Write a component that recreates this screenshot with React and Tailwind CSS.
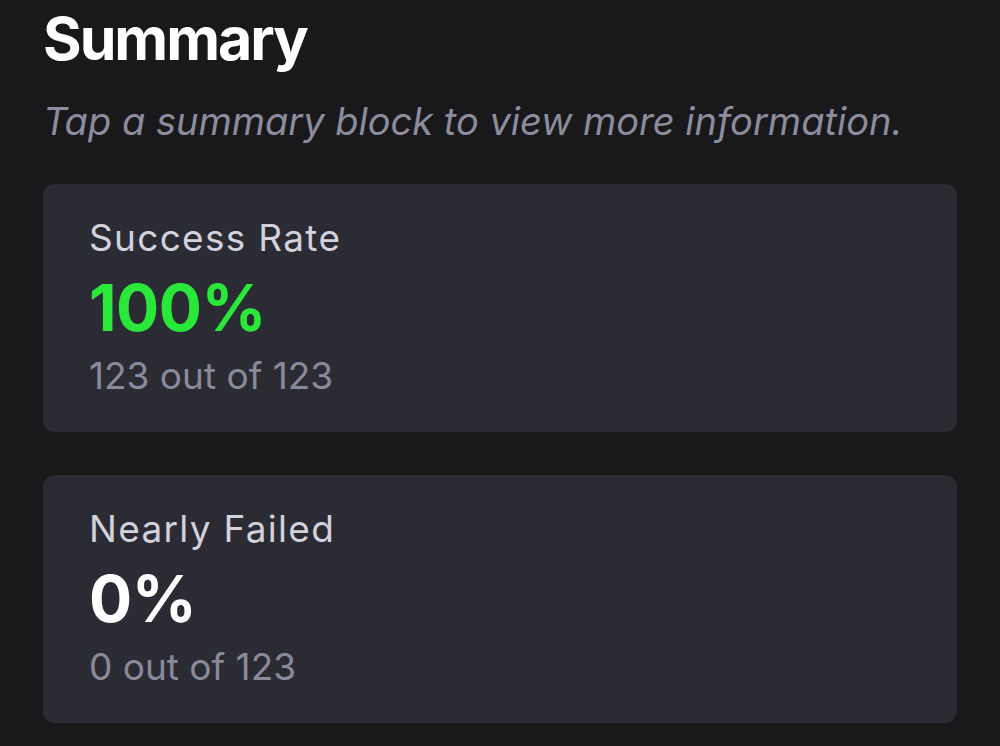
export default function App() {
  const blocks = [
    { label: "Success Rate", value: "100%", detail: "123 out of 123", color: "text-[#2ae83a]" },
    { label: "Nearly Failed", value: "0%", detail: "0 out of 123", color: "text-white" },
  ];

  return (
    <div
      className="min-h-[746px] bg-[#19191b] px-[43px] pt-[4px]"
      style={{ fontFamily: "Inter, 'Noto Sans', sans-serif" }}
    >
      <h1 className="text-[59px] leading-[70px] font-bold text-white tracking-[-2px]">Summary</h1>
      <p className="mt-[24px] text-[38px] leading-[46px] italic text-[#8d8c9c]">
        Tap a summary block to view more information.
      </p>

      <div className="mt-[40px] flex flex-col gap-[43px]">
        {blocks.map((b) => (
          <div key={b.label} className="rounded-[12px] bg-[#2b2b33] pl-[46px] pt-[32px] pb-[34px]">
            <div className="text-[37px] leading-[44px] text-[#d2d1dc] tracking-[1.3px]">{b.label}</div>
            <div className={`mt-[16px] text-[64px] leading-[64px] font-bold tracking-[-0.5px] ${b.color}`}>{b.value}</div>
            <div className="mt-[14px] text-[37px] leading-[44px] text-[#8a8999]">{b.detail}</div>
          </div>
        ))}
      </div>
    </div>
  );
}
